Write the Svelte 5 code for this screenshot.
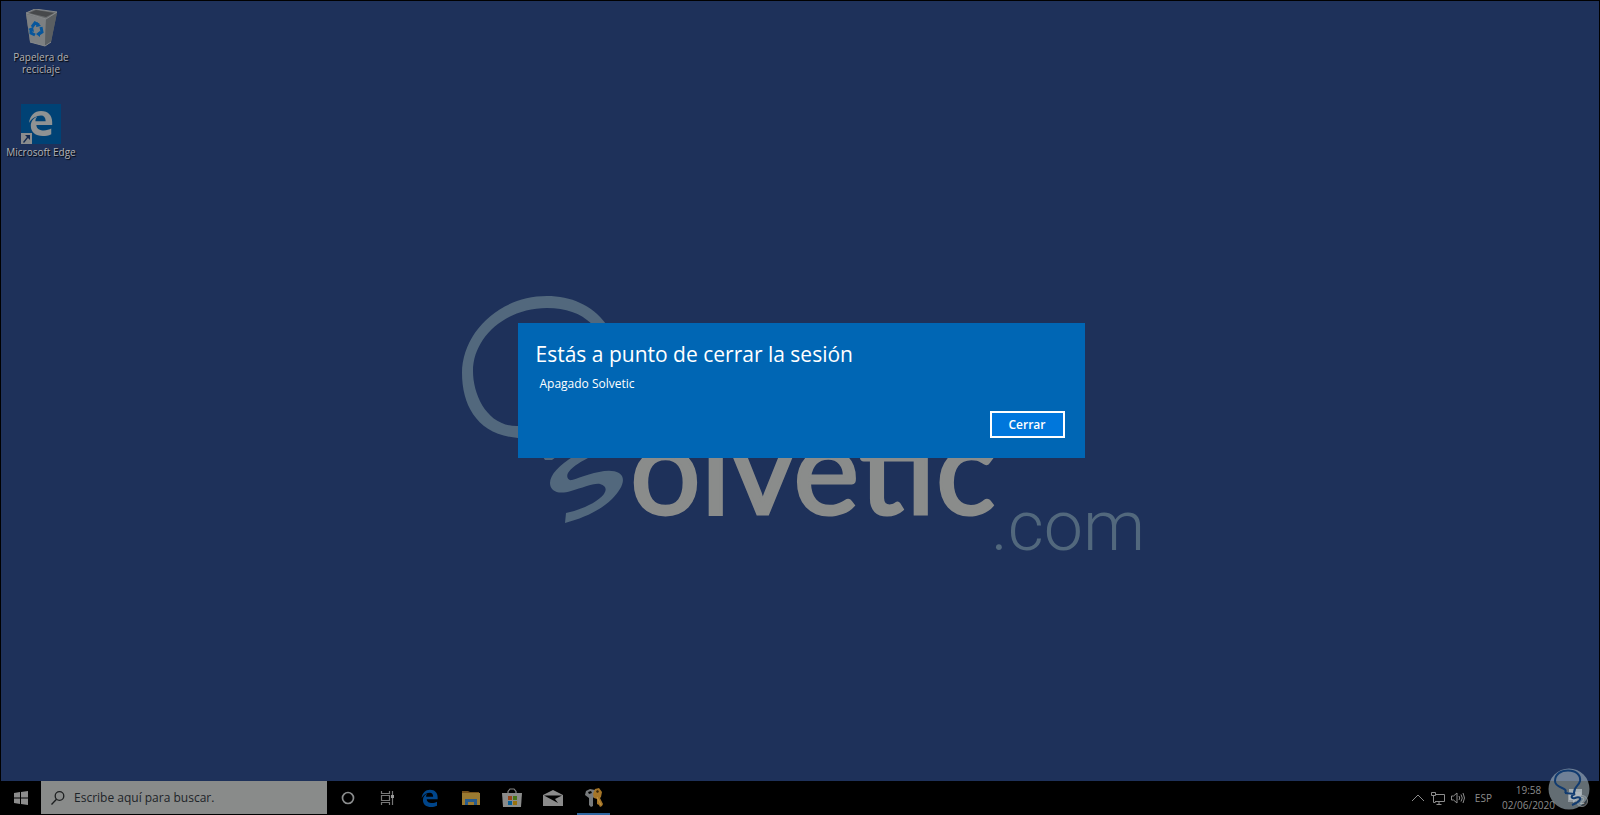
<script>
	let query = $state("");
	let open = $state(true);

	const apps = [
		{ id: "cortana", label: "Cortana" },
		{ id: "taskview", label: "Vista de tareas" },
		{ id: "edge", label: "Microsoft Edge" },
		{ id: "files", label: "Explorador de archivos" },
		{ id: "store", label: "Microsoft Store" },
		{ id: "mail", label: "Correo" },
		{ id: "keys", label: "Credenciales", active: true },
	];
</script>

{#snippet edge()}
	<path
		d="M1 14C2 6 7 1 14 1c8 0 12 5 12 12v3H9c0 4 4 6 8 6 3 0 6-1 8-2v6c-3 1.500-6 2-9 2-8 0-13-4-13-11 0-5 3-8 7-10-1.500 2-2 3-2 5h11c0-4-2-6-5-6-5 0-10 3-13 8z"
	/>
{/snippet}

<div class="screen">
	<main class="desktop">
		<svg class="wallpaper" viewBox="441 209 720 360" aria-hidden="true">
			<path
				class="swash"
				d="M606 323C592 304 571 295 547 295C499 295 462 332 462 372C462 405 478 434 518 437V425C488 426 473 395 473 370C473 337 505 307 547 307C566 307 580 312 592 323Z"
			/>
			<path
				class="swash"
				d="M543 456H556L552 459H545ZM574 455C559 464 550 474 550 482C550 490 558 494 571 490C583 487 593 482 600 483C606 485 607 488 604 493C597 502 580 509 566 512L565 522C584 517 601 509 612 498C622 488 627 477 619 472C607 465 583 476 572 479C568 480 566 476 568 472C571 467 578 462 588 457Z"
			/>
			<text class="brand" x="630" y="513">olvetic</text>
			<text class="domain" x="991" y="549">.com</text>
		</svg>

		<ul class="shortcuts">
			<li>
				<button class="shortcut">
					<svg width="40" height="40" viewBox="0 0 40 40" aria-hidden="true">
						<path fill="#686b6d" d="M5 4l9-4 22 3-6 30-6 4-15-4z" />
						<path fill="#7d8082" d="M5 5l20 5-1 27-15-4z" />
						<path fill="#5b5f62" d="M25 10l11-6-6 29-6 4z" />
						<path fill="#47494b" d="M8 4l7-3 18 3-8 4z" />
						<path fill="none" stroke="#85888a" d="M5 4l9-4 22 3-11 7zM9 33l15 4 6-4" />
						<g fill="none" stroke="#07569c" stroke-width="3">
							<path d="M11 18l3-4 4 2M20 18l1 5-3 2M14 26l-4-2 0-4" />
						</g>
						<path fill="#07569c" d="M16 13l4 4-5 1zM19 22v6l-4-3zM7 20l5-2 1 5z" />
					</svg>
					<span>Papelera de reciclaje</span>
				</button>
			</li>
			<li>
				<button class="shortcut">
					<svg width="40" height="40" viewBox="0 0 40 40" aria-hidden="true">
						<path fill="#004275" d="M0 0h40v40H0z" />
						<g fill="#8f9293" transform="translate(7 6) scale(.93)">{@render edge()}</g>
						<path fill="#8a8c8d" d="M0 29h11v11H0z" />
						<path fill="#142a50" d="M4 31h5v5L7 34 3 39l-1-1 4-5z" />
					</svg>
					<span>Microsoft Edge</span>
				</button>
			</li>
		</ul>

		{#if open}
			<div class="dialog" role="dialog" aria-labelledby="title" aria-describedby="message">
				<h1 id="title">Estás a punto de cerrar la sesión</h1>
				<p id="message">Apagado Solvetic</p>
				<button class="close" onclick={() => (open = false)}>Cerrar</button>
			</div>
		{/if}
	</main>

	<footer class="taskbar">
		<button class="start" aria-label="Inicio">
			<svg width="14" height="14" viewBox="0 0 14 14" aria-hidden="true">
				<path fill="#8c8c8c" d="M0 2l6-1v5.500H0zM7 1l7-1v6.500H7zM0 7.500h6V13l-6-1zM7 7.500h7V14l-7-1z" />
			</svg>
		</button>
		<label class="search">
			<svg width="14" height="14" viewBox="0 0 14 14" aria-hidden="true">
				<g fill="none" stroke="#1d1f20" stroke-width="1.300">
					<circle cx="8.500" cy="5" r="4.300" />
					<path d="M5.500 8.200L.5 13.500" />
				</g>
			</svg>
			<input type="text" bind:value={query} placeholder="Escribe aquí para buscar." aria-label="Buscar" />
		</label>

		<nav class="apps">
			{#each apps as app}
				<button class:active={app.active} aria-label={app.label}>
					<svg width="20" height="20" viewBox="0 0 20 20" aria-hidden="true">
						{#if app.id == "cortana"}
							<circle cx="10" cy="10" r="5.500" fill="none" stroke="#8b8d8e" stroke-width="1.700" />
						{:else if app.id == "taskview"}
							<path fill="none" stroke="#777" stroke-width="1.200" d="M2.500 3v2.500h8V3M2.500 7.500h8v5h-8zM2.500 17v-2.500h8V17M13.500 3v14" />
							<path fill="#999" d="M12 7h3v3h-3z" />
						{:else if app.id == "edge"}
							<g fill="#00458a" transform="translate(1 1) scale(.64)">{@render edge()}</g>
						{:else if app.id == "files"}
							<path fill="#77511a" d="M1 3h6l2 1h9v3H1z" />
							<path fill="#9b7a31" d="M1 5h18v12H1z" />
							<path fill="#285b8c" d="M4 17v-6h12v6h-3v-3H7v3z" />
						{:else if app.id == "store"}
							<path fill="none" stroke="#858585" stroke-width="1.200" d="M6 6V3.500L8 1h4l2 2.500V6" />
							<path fill="#8b8c8b" d="M0 5h20l-1 14H1z" />
							<path fill="#974419" d="M6 8h4v4H6z" />
							<path fill="#467615" d="M11 8h4v4h-4z" />
							<path fill="#075f97" d="M6 13h4v4H6z" />
							<path fill="#98710d" d="M11 13h4v4h-4z" />
						{:else if app.id == "mail"}
							<path fill="#8b8b8b" d="M0 7l10-5 10 5v11H0z" />
							<path fill="#000" d="M1 7.500h18L12 11l3 4z" />
						{:else}
							<path fill="#777a7c" d="M2 3l4-2 5 1 1 5-3 3v8l-2 1-2-2V10L1 7z" />
							<path fill="#000" d="M4 4l3-1 1 2-3 1z" />
							<path fill="#a57527" d="M9 6l2-5 4-1 3 4-1 5-1 1 3 6-1 2-2 1-1-2-2-1v-5l-3-1z" />
							<path fill="#38260a" d="M12 3l2-1 1 2-2 1z" />
							<path fill="none" stroke="#c39545" d="M13 9l4 8" />
						{/if}
					</svg>
				</button>
			{/each}
		</nav>

		<div class="tray">
			<button aria-label="Mostrar iconos ocultos">
				<svg width="14" height="14" viewBox="0 0 14 14" aria-hidden="true">
					<path d="M1 10l6-6 6 6" />
				</svg>
			</button>
			<button aria-label="Red">
				<svg width="14" height="14" viewBox="0 0 14 14" aria-hidden="true">
					<path d="M5 3.500h8.500v7H4M8 10.500v3M5.500 13.500h5M.5 1.500h4v3h-4zM2.500 4.500v7h2" />
				</svg>
			</button>
			<button aria-label="Volumen">
				<svg width="14" height="14" viewBox="0 0 14 14" aria-hidden="true">
					<path d="M.5 5h2L6 2v10L2.500 9h-2zM8 5q1.500 2 0 4M10 3.500q2.500 3.500 0 7M12 2q3 5 0 10" />
				</svg>
			</button>
			<button class="language">ESP</button>
			<button class="clock">
				<time>19:58</time>
				<time>02/06/2020</time>
			</button>
			<button class="notifications" aria-label="Notificaciones">
				<svg width="20" height="20" viewBox="0 0 20 20" aria-hidden="true">
					<path class="note" d="M1 1h13v11H8l-3 3v-3H1z" />
					<circle class="count" cx="14" cy="13" r="5.500" />
					<text x="14" y="16" text-anchor="middle">2</text>
				</svg>
			</button>
		</div>
	</footer>

	<svg class="watermark" width="42" height="42" viewBox="0 0 42 42" aria-hidden="true">
		<circle cx="21" cy="21" r="20.500" fill="#a5b5c0" fill-opacity=".6" />
		<path fill="#b4bbc0" fill-opacity=".6" d="M20 24h13v6l-6 4h-7z" />
		<g fill="none" stroke="#113b70">
			<path d="M17 25C21 19 7 21 7 13C7 6 13 2.500 20 2.500C28 2.500 33 7 32 13C31 18 26 18 26 25" stroke-width="2" />
			<path d="M17 25L27 26C22 28 23 31 27 30C31 28 34 30 31 33C29 35 27 36 24 37" stroke-width="2" />
		</g>
	</svg>
</div>

<style>
	:global(body) {
		margin: 0;
		background: #000;
	}
	.screen {
		position: relative;
		display: flex;
		flex-direction: column;
		min-height: 100vh;
		font-family: "Open Sans", "Noto Sans", sans-serif;
		overflow: hidden;
	}
	button {
		margin: 0;
		padding: 0;
		border: 0;
		background: none;
		color: inherit;
		font: inherit;
	}
	svg {
		display: block;
		flex: none;
	}
	.desktop {
		flex: 1;
		display: grid;
		grid-template-columns: minmax(0, 1fr);
		align-items: center;
		justify-items: center;
		box-sizing: border-box;
		padding: 0 0 2px 2px;
		border: 1px solid #000;
		border-bottom: 0;
		background: #1e315a;
	}
	.desktop > * {
		grid-area: 1 / 1;
	}
	.wallpaper {
		width: 720px;
		max-width: 100%;
	}
	.swash {
		fill: #52687d;
	}
	.brand {
		fill: #8a8c8b;
		stroke: #8a8c8b;
		stroke-width: 3px;
		font: 400 125px Lato, sans-serif;
	}
	.domain {
		fill: #52687d;
		font: 300 70px Roboto, sans-serif;
	}
	.shortcuts {
		place-self: start;
		display: flex;
		flex-direction: column;
		gap: 29px;
		margin: 0;
		padding: 8px 0 0;
		list-style: none;
	}
	.shortcut {
		display: flex;
		flex-direction: column;
		align-items: center;
		gap: 2px;
		width: 76px;
		color: #b2b2b2;
		font-size: 10px;
		line-height: 12px;
		text-shadow: 1px 1px 1px #000;
	}
	.shortcut span {
		max-width: 76px;
	}
	.dialog {
		display: flex;
		flex-direction: column;
		align-items: flex-start;
		box-sizing: border-box;
		width: 567px;
		max-width: 100%;
		padding: 14px 20px 20px 18px;
		background: #0066b4;
		color: #fff;
	}
	h1 {
		margin: 0;
		font-size: 21px;
		font-weight: 400;
		line-height: 34px;
	}
	p {
		margin: 4px 0 18px 4px;
		font-size: 12px;
		line-height: 18px;
	}
	.close {
		align-self: flex-end;
		box-sizing: border-box;
		width: 75px;
		height: 27px;
		border: 2px solid #fff;
		background: #0077dc;
		font-size: 12px;
		font-weight: 600;
	}
	.taskbar {
		display: flex;
		height: 34px;
		background: #000;
		color: #8c8c8c;
	}
	.start {
		display: grid;
		place-items: center;
		width: 41px;
	}
	.search {
		display: flex;
		align-items: center;
		gap: 9px;
		box-sizing: border-box;
		width: 286px;
		margin-bottom: 1px;
		padding-left: 10px;
		background: #898b8a;
	}
	.search input {
		flex: 1;
		min-width: 0;
		padding: 0;
		border: 0;
		outline: 0;
		background: none;
		color: #1d2328;
		font: 12px "Open Sans", sans-serif;
	}
	.search input::placeholder {
		color: #1d2328;
		opacity: 1;
	}
	.apps {
		display: flex;
		gap: 8px;
		padding-left: 4px;
	}
	.apps button {
		display: grid;
		place-items: center;
		width: 33px;
	}
	.apps .active {
		box-shadow: inset 0 -2px #2f659e;
	}
	.tray {
		display: flex;
		align-items: center;
		gap: 6px;
		margin-left: auto;
		padding-right: 12px;
		font-size: 10px;
	}
	.tray svg {
		fill: none;
		stroke: #8c8c8c;
	}
	.language {
		margin-left: 4px;
	}
	.clock {
		display: flex;
		flex-direction: column;
		align-items: center;
		margin-left: 4px;
		line-height: 15px;
	}
	.notifications {
		margin-left: 7px;
	}
	.notifications .note {
		fill: #a0a0a0;
		stroke: none;
	}
	.notifications .count {
		fill: #303a42;
		stroke: #777;
	}
	.notifications text {
		fill: #aaa;
		stroke: none;
		font-size: 9px;
	}
	.watermark {
		position: absolute;
		right: 10px;
		bottom: 5px;
		pointer-events: none;
	}
</style>
